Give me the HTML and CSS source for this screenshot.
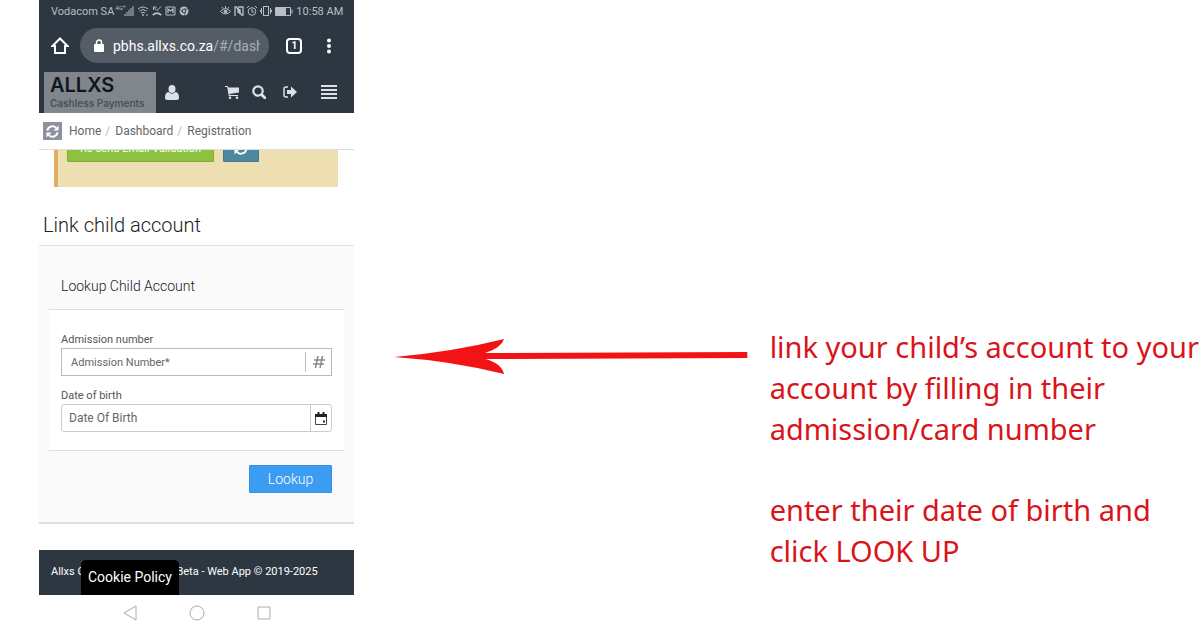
FILE: index.html
```
<!DOCTYPE html>
<html lang="en">
<head>
    <meta charset="UTF-8">
    <meta name="viewport" content="width=device-width, initial-scale=1.0">
    <title>Link child account</title>
    <link rel="stylesheet" href="styles.css">
</head>
<body>
    <div class="guide">
        <div class="phone">
            <div class="status-bar">
                <span>Vodacom SA</span>
                <span class="network">4G<sup>+</sup></span>
                <svg class="signal" width="10" height="10" viewBox="0 0 10 10"><path d="M1 10V8M3 10V6M5 10V4M7 10V2M9 10V0" stroke="currentColor"/></svg>
                <svg width="12" height="10" viewBox="0 0 12 10" fill="none" stroke="currentColor"><path d="M1 3q5-4 10 0M2.500 5q3.500-3 7 0M4 7q2-1.500 4 0"/><circle cx="6" cy="9" r=".6"/><path d="M9 9h2"/></svg>
                <svg width="10" height="10" viewBox="0 0 10 10" fill="none" stroke="currentColor"><path d="M1.500 1L5 4.500 9 .5M1.500 4V1h3"/><path d="M.8 9.200Q5 5 9.200 9.200" stroke-width="1.800"/></svg>
                <svg width="11" height="10" viewBox="0 0 11 10" fill="none" stroke="currentColor"><path d="M1 1h9v6M1 1v8h9V7"/><path d="M3 7V3l2.500 2L8 3v4" stroke-width="1.300"/></svg>
                <svg width="10" height="10" viewBox="0 0 10 10"><circle cx="5" cy="5" r="4.500" fill="currentColor"/><circle cx="5" cy="5" r="1.800" fill="currentColor" stroke="#2d3741"/><path d="M5 3h4M3 6L1 3M6.500 6.500L5 9.500" stroke="#2d3741" stroke-width=".7"/></svg>
                <span class="status-right">
                    <svg width="11" height="10" viewBox="0 0 11 10" fill="none" stroke="currentColor"><path d="M.5 5.500q5-6 10 0-5 5-10 0zM5.500 0v2M2 1l1 1.500M9 1L8 2.500"/><circle cx="5.500" cy="5.500" r="1.500" fill="currentColor"/></svg>
                    <svg width="10" height="10" viewBox="0 0 10 10" fill="none" stroke="currentColor" stroke-width="1.300"><path d="M1 10V1h1.500L6 8V3M4 1h5v8H7.500L4 2v5"/></svg>
                    <svg width="10" height="10" viewBox="0 0 10 10" fill="none" stroke="currentColor"><circle cx="5" cy="5.500" r="3.800"/><path d="M5 3v3h2M0 2l2-2M10 2L8 0"/></svg>
                    <svg width="12" height="10" viewBox="0 0 12 10" fill="none" stroke="currentColor"><rect x="3.500" y=".5" width="5" height="9"/><path d="M1.500 2v6M10.500 2v6M.5 4v2M11.500 4v2"/></svg>
                    <svg class="battery" width="18" height="9" viewBox="0 0 18 9"><path d="M.5.5h15v8H.5zM17 2.500v4" fill="none" stroke="currentColor"/><path d="M1 1h10v7H1z" fill="currentColor"/></svg>
                    <span>10:58 AM</span>
                </span>
            </div>

            <div class="browser-bar">
                <button class="icon-btn" aria-label="Home">
                    <svg width="18" height="18" viewBox="0 0 18 18" fill="none" stroke="#fff" stroke-width="2"><path d="M4 9H1.500L9 1.500 16.500 9H14M4 8v8h10V8"/></svg>
                </button>
                <a class="address" href="#">
                    <svg width="10" height="13" viewBox="0 0 10 13"><rect y="5" width="10" height="8" rx="1" fill="#fff"/><path d="M2.500 5V3.500a2.500 2.500 0 0 1 5 0V5" fill="none" stroke="#fff" stroke-width="1.500"/></svg>
                    <span class="url">pbhs.allxs.co.za<span class="path">/#/dash</span></span>
                </a>
                <button class="tabs" aria-label="Tabs">1</button>
                <button class="icon-btn" aria-label="Menu">
                    <svg width="6" height="16" viewBox="0 0 6 16" fill="#fff"><circle cx="3" cy="2.500" r="2"/><circle cx="3" cy="8" r="2"/><circle cx="3" cy="13.500" r="2"/></svg>
                </button>
            </div>

            <header class="app-header">
                <a class="logo" href="#">
                    <strong>ALLXS</strong>
                    <span>Cashless Payments</span>
                </a>
                <button class="icon-btn" aria-label="Profile">
                    <svg width="14" height="15" viewBox="0 0 14 15" fill="currentColor"><ellipse cx="7" cy="4" rx="3.500" ry="4"/><path d="M3.500 7Q0 7.500 0 12.500 0 15 2.500 15h9q2.500 0 2.500-2.500Q14 7.500 10.500 7 7 10.500 3.500 7z"/></svg>
                </button>
                <div class="header-actions">
                    <button class="icon-btn" aria-label="Cart">
                        <svg width="14" height="13" viewBox="0 0 14 13" fill="currentColor"><path d="M0 0h3l.4 1.500H14v5L4.500 8l.3 1H13v1H3.800L2.200 1H0z"/><circle cx="5" cy="11.700" r="1.300"/><circle cx="12" cy="11.700" r="1.300"/></svg>
                    </button>
                    <button class="icon-btn" aria-label="Search">
                        <svg width="14" height="14" viewBox="0 0 14 14" fill="none" stroke="currentColor"><circle cx="6" cy="6" r="4.700" stroke-width="2.200"/><path d="M9.500 9.500L13 13" stroke-width="2.800" stroke-linecap="round"/></svg>
                    </button>
                    <button class="icon-btn" aria-label="Log out">
                        <svg width="14" height="12" viewBox="0 0 14 12"><path d="M5 1H3Q1 1 1 3v6q0 2 2 2h2" fill="none" stroke="currentColor" stroke-width="1.500"/><path d="M4 4h4V.5L14 6l-6 5.500V8H4z" fill="currentColor"/></svg>
                    </button>
                    <button class="icon-btn burger" aria-label="Navigation">
                        <svg width="16" height="14" viewBox="0 0 16 14"><path d="M0 1h16M0 5h16M0 9h16M0 13h16" stroke="currentColor" stroke-width="2"/></svg>
                    </button>
                </div>
            </header>

            <nav class="breadcrumb">
                <button class="refresh" aria-label="Refresh">
                    <svg width="13" height="13" viewBox="0 0 14 14" fill="none" stroke="currentColor" stroke-width="2"><path d="M1.500 6A5.500 5.500 0 0 1 11 3.200M12.500 8A5.500 5.500 0 0 1 3 10.800"/><path d="M13.500.5v5.500H8zM.5 13.500V8H6z" fill="currentColor" stroke="none"/></svg>
                </button>
                <a href="#">Home</a>
                <span class="divider">/</span>
                <a href="#">Dashboard</a>
                <span class="divider">/</span>
                <a href="#">Registration</a>
            </nav>

            <main>
                <!-- alert scrolled partly under the breadcrumb -->
                <div class="alert-window">
                    <div class="alert">
                        <button class="btn btn-green">Re-send Email Validation</button>
                        <button class="btn btn-teal" aria-label="Refresh status">
                            <svg width="14" height="14" viewBox="0 0 14 14" fill="none" stroke="currentColor" stroke-width="2"><path d="M1.500 6A5.500 5.500 0 0 1 11 3.200M12.500 8A5.500 5.500 0 0 1 3 10.800"/><path d="M13.500.5v5.500H8zM.5 13.500V8H6z" fill="currentColor" stroke="none"/></svg>
                        </button>
                    </div>
                </div>

                <h1>Link child account</h1>

                <section class="panel">
                    <h2>Lookup Child Account</h2>
                    <form class="fields" id="lookup">
                        <label for="admission">Admission number</label>
                        <div class="field">
                            <input type="text" id="admission" placeholder="Admission Number*">
                            <span class="hash">
                                <svg width="12" height="12" viewBox="0 0 12 12" stroke="currentColor" stroke-width="1.500"><path d="M5 0L2.500 12M9.500 0L7 12M1 4h11M0 8h11"/></svg>
                            </span>
                        </div>
                        <label for="birth">Date of birth</label>
                        <div class="field date-field">
                            <input type="text" id="birth" placeholder="Date Of Birth">
                            <button type="button" class="calendar" aria-label="Open calendar">
                                <svg width="12" height="13" viewBox="0 0 12 13"><path d="M.5 4v8.500h11V4" fill="none" stroke="#444"/><path d="M0 2h12v3H0z" fill="#222"/><path d="M3.500 0v3M8.500 0v3" stroke="#222" stroke-width="2"/><path d="M8 8.500h2v2H8z" fill="#222"/></svg>
                            </button>
                        </div>
                    </form>
                    <div class="panel-footer">
                        <button class="btn btn-blue" form="lookup">Lookup</button>
                    </div>
                </section>
            </main>

            <footer>
                Allxs Cashless Payments Beta - Web App © 2019-2025
                <a class="cookie" href="#">Cookie Policy</a>
            </footer>

            <div class="nav-bar">
                <button class="icon-btn" aria-label="Back"><svg width="14" height="16" viewBox="0 0 14 16" fill="none" stroke="currentColor"><path d="M13 1v14L1 8z"/></svg></button>
                <button class="icon-btn" aria-label="Home screen"><svg width="16" height="16" viewBox="0 0 16 16" fill="none" stroke="currentColor"><circle cx="8" cy="8" r="7"/></svg></button>
                <button class="icon-btn" aria-label="Recent apps"><svg width="14" height="14" viewBox="0 0 14 14" fill="none" stroke="currentColor"><path d="M1 1h12v12H1z"/></svg></button>
            </div>
        </div>

        <div class="arrow">
            <svg viewBox="0 0 353 38" fill="#f21414"><path d="M0 19Q58 14 110 1q-3 9-19 14L353 14v6L91 21q16 4 19 15Q58 23 0 19z"/></svg>
        </div>

        <div class="note">
            <p>link your child’s account to your<br>account by filling in their<br>admission/card number</p>
            <p>enter their date of birth and<br>click LOOK UP</p>
        </div>
    </div>
</body>
</html>
```
FILE: styles.css
```
* {
    box-sizing: border-box;
}
body {
    margin: 0;
    background: #fff;
    font-family: Roboto, "Liberation Sans", sans-serif;
    font-size: 12px;
    color: #555;
}
a {
    color: inherit;
    text-decoration: none;
}
button, input {
    font: inherit;
}
svg {
    display: block;
    flex: none;
}
.guide {
    display: grid;
    grid-template-columns: 63fr 83fr 86fr;
    min-height: 100vh;
    padding-left: 39px;
    overflow: hidden;
}
.icon-btn {
    display: flex;
    padding: 0;
    border: none;
    background: none;
    color: inherit;
}

/* Phone */
.phone {
    display: flex;
    flex-direction: column;
    min-width: 0;
}
.status-bar {
    display: flex;
    align-items: center;
    gap: 3px;
    height: 22px;
    padding: 0 11px 0 12px;
    background: #2d3741;
    color: #b9bec4;
    font-size: 11px;
    white-space: nowrap;
}
.network {
    display: flex;
    align-self: flex-start;
    margin: 4px -3px 0 -2px;
    font-size: 6px;
}
.network sup {
    font-size: 5px;
    line-height: 1;
}
.signal {
    margin-left: -2px;
}
.status-right {
    display: flex;
    align-items: center;
    gap: 3px;
    margin-left: auto;
}
.browser-bar {
    display: flex;
    align-items: center;
    height: 47px;
    padding: 0 22px 0 12px;
    background: #2d3741;
    color: #fff;
}
.address {
    display: flex;
    flex: 1;
    align-items: center;
    gap: 9px;
    min-width: 0;
    height: 35px;
    margin: 0 17px 0 11px;
    padding: 0 9px 0 14px;
    border-radius: 18px;
    background: #545c66;
    font-size: 14px;
}
.url {
    overflow: hidden;
    white-space: nowrap;
}
.path {
    color: #a9afb6;
}
.tabs {
    width: 16px;
    height: 16px;
    margin-right: 24px;
    padding: 0;
    border: 2px solid #fff;
    border-radius: 4px;
    background: none;
    color: #fff;
    font-size: 10px;
    font-weight: bold;
    line-height: 12px;
}

/* App header */
.app-header {
    display: flex;
    align-items: center;
    height: 44px;
    padding: 2px 17px 0 5px;
    background: #2d3741;
    color: #dde1e6;
}
.logo {
    display: flex;
    flex-direction: column;
    justify-content: center;
    width: 112px;
    height: 41px;
    margin-right: 9px;
    padding-left: 6px;
    background: #80868b;
    font-family: Inter, "Liberation Sans", sans-serif;
}
.logo strong {
    color: #10161d;
    font-size: 20px;
    font-weight: 600;
    line-height: 22px;
}
.logo span {
    color: #4b5158;
    font-size: 10px;
    font-weight: 600;
    line-height: 14px;
}
.header-actions {
    display: flex;
    align-items: center;
    gap: 13px;
    margin-left: auto;
}
.header-actions .icon-btn:nth-child(3) {
    margin-left: 4px;
}
.header-actions .burger {
    margin-left: 11px;
}
.breadcrumb {
    display: flex;
    align-items: center;
    height: 37px;
    padding-left: 4px;
    border-bottom: 1px solid #ddd;
    color: #666;
}
.refresh {
    display: flex;
    align-items: center;
    justify-content: center;
    width: 19px;
    height: 18px;
    margin-right: 7px;
    padding: 0;
    border: none;
    background: #8c919c;
    color: #fff;
}
.divider {
    margin: 0 5px 0 4px;
    color: #bbb;
}

/* Content */
.alert-window {
    display: flex;
    flex-direction: column;
    justify-content: flex-end;
    height: 37px;
    margin: 0 16px 0 15px;
    overflow: hidden;
}
.alert {
    display: flex;
    gap: 9px;
    padding: 20px 9px 25px;
    border-left: 4px solid #dfae62;
    background: #eedfb3;
}
.btn {
    height: 28px;
    padding: 0 12px;
    border: 1px solid;
    border-radius: 1px;
    color: #fff;
}
.btn-green {
    border-color: #7fae34;
    background: #8cc23f;
    font-size: 11px;
}
.btn-teal {
    padding: 0 10px;
    border-color: #43788f;
    background: #4d87a0;
}
.btn-blue {
    padding: 0 18px;
    border-color: #3490e2;
    background: #3b9cf2;
    font-size: 14px;
    font-weight: 300;
}
h1 {
    margin: 0;
    padding: 25px 4px 7px;
    border-bottom: 1px solid #e2e2e2;
    color: #222;
    font-size: 20px;
    font-weight: 300;
    line-height: 26px;
}
.panel {
    padding: 16px 10px 23px;
    border-bottom: 2px solid #ddd;
    background: #fafafa;
}
h2 {
    margin: 0;
    padding: 14px 12px 13px;
    border-bottom: 1px solid #ddd;
    color: #222;
    font-size: 14px;
    font-weight: 300;
    line-height: 20px;
}
.fields {
    padding: 22px 12px 18px;
    border-bottom: 1px solid #ddd;
    background: #fff;
}
.fields label {
    display: block;
    font-size: 11px;
    line-height: 16px;
}
.field {
    display: flex;
    align-items: center;
    height: 28px;
    border: 1px solid #bbb;
    font-size: 11px;
}
.field + label {
    margin-top: 12px;
}
.field input {
    flex: 1;
    min-width: 0;
    height: 100%;
    padding: 0 9px;
    border: none;
    background: none;
}
.field input::placeholder {
    color: #666;
}
.hash {
    display: flex;
    justify-content: center;
    width: 26px;
    padding: 4px 0;
    border-left: 1px solid #bbb;
    color: #888;
}
.date-field {
    border-color: #ccc;
    border-radius: 3px;
    font-size: 12px;
}
.date-field input {
    padding: 0 7px;
}
.calendar {
    display: flex;
    align-items: center;
    justify-content: center;
    width: 21px;
    height: 100%;
    padding: 0;
    border: none;
    border-left: 1px solid #ccc;
    background: none;
}
.panel-footer {
    display: flex;
    justify-content: flex-end;
    padding: 14px 12px 6px;
}

/* Bottom */
footer {
    position: relative;
    height: 45px;
    margin-top: 26px;
    padding-left: 12px;
    background: #2d3741;
    color: #fff;
    font-size: 11px;
    line-height: 43px;
    white-space: nowrap;
}
.cookie {
    position: absolute;
    bottom: 0;
    left: 42px;
    padding: 0 7px;
    border-radius: 5px 5px 0 0;
    background: #000;
    font-size: 14px;
    line-height: 35px;
}
.nav-bar {
    display: flex;
    align-items: center;
    justify-content: center;
    gap: 52px;
    height: 35px;
    color: #aaa;
}

/* Instructions */
.arrow {
    padding: 338px 22px 0 40px;
}
.arrow svg {
    width: 100%;
}
.note {
    padding-top: 326px;
    color: #d9141a;
    font-family: "Noto Sans", "Open Sans", sans-serif;
    font-size: 29px;
    line-height: 41px;
    white-space: nowrap;
}
.note p {
    margin: 0 0 40px;
}
```
